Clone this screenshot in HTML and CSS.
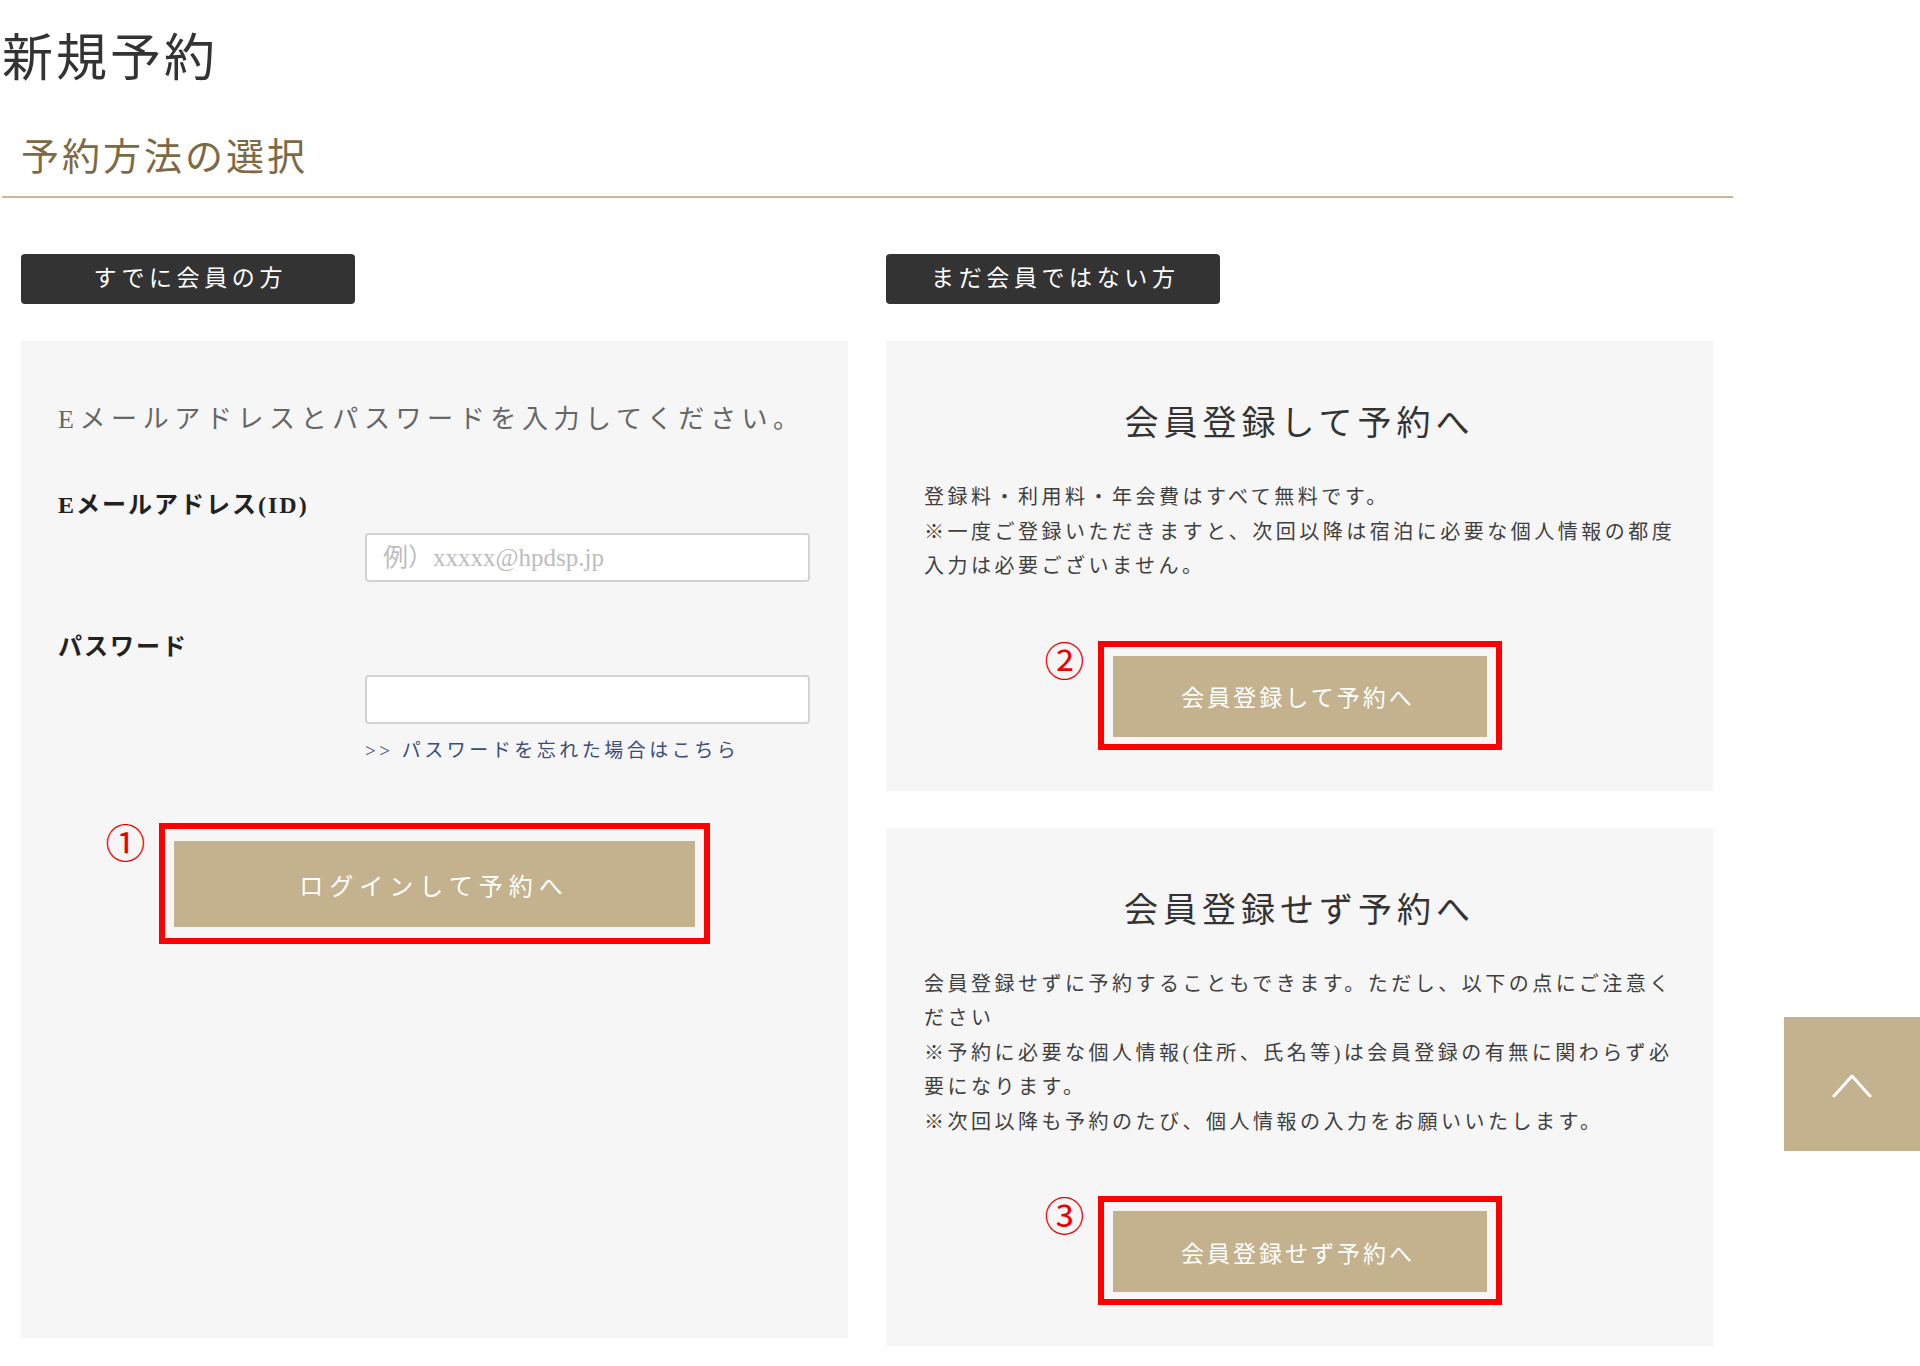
FILE: index.html
```html
<!DOCTYPE html>
<html lang="ja">
<head>
<meta charset="utf-8">
<title>新規予約</title>
<link rel="stylesheet" href="styles.css">
</head>
<body>
<div class="page">
  <h1 class="page-title">新規予約</h1>
  <h2 class="section-title">予約方法の選択</h2>

  <div class="columns">
    <section class="col">
      <div class="tag">すでに会員の方</div>
      <div class="panel panel-login">
        <p class="intro">Eメールアドレスとパスワードを入力してください。</p>
        <div class="field">
          <label class="field-label" for="email">Eメールアドレス(ID)</label>
          <input class="field-input" id="email" type="text" placeholder="例）xxxxx@hpdsp.jp">
        </div>
        <div class="field">
          <label class="field-label" for="pw">パスワード</label>
          <input class="field-input" id="pw" type="password">
          <a class="forgot" href="#">&gt;&gt; パスワードを忘れた場合はこちら</a>
        </div>
        <div class="annot annot-login">
          <span class="annot-num">①</span>
          <button class="btn btn-login" type="button">ログインして予約へ</button>
        </div>
      </div>
    </section>

    <section class="col">
      <div class="tag">まだ会員ではない方</div>
      <div class="panel panel-option">
        <h3 class="option-title">会員登録して予約へ</h3>
        <p class="note">登録料・利用料・年会費はすべて無料です。<br>※一度ご登録いただきますと、次回以降は宿泊に必要な個人情報の都度入力は必要ございません。</p>
        <div class="annot annot-option">
          <span class="annot-num">②</span>
          <button class="btn btn-option" type="button">会員登録して予約へ</button>
        </div>
      </div>
      <div class="panel panel-option">
        <h3 class="option-title">会員登録せず予約へ</h3>
        <p class="note">会員登録せずに予約することもできます。ただし、以下の点にご注意ください<br>※予約に必要な個人情報(住所、氏名等)は会員登録の有無に関わらず必要になります。<br>※次回以降も予約のたび、個人情報の入力をお願いいたします。</p>
        <div class="annot annot-option">
          <span class="annot-num">③</span>
          <button class="btn btn-option" type="button">会員登録せず予約へ</button>
        </div>
      </div>
    </section>
  </div>
</div>

<a class="to-top" href="#" aria-label="ページトップへ">
  <svg class="to-top-icon" width="40" height="24" viewBox="0 0 40 24"><polyline points="2,22 20,2 38,22" fill="none" stroke="#ffffff" stroke-width="3" stroke-linecap="round" stroke-linejoin="round"/></svg>
</a>
</body>
</html>
```

FILE: styles.css
```css
* { box-sizing: border-box; }

html, body {
  margin: 0;
  padding: 0;
  background: #ffffff;
}

body {
  font-family: "Liberation Serif", "Noto Sans CJK JP", serif;
  color: #333333;
}

.page {
  width: 1733px;
}

.page-title {
  margin: 29px 0 0 2px;
  font-size: 51px;
  line-height: 60px;
  font-weight: 400;
  letter-spacing: 3px;
  color: #333333;
}

.section-title {
  margin: 46px 0 0 2px;
  padding: 0 0 17px 19px;
  font-size: 38px;
  line-height: 44px;
  font-weight: 400;
  letter-spacing: 3px;
  color: #7d6a45;
  border-bottom: 2px solid #c8b792;
}

.columns {
  margin-top: 56px;
  padding: 0 20px 0 21px;
  display: grid;
  grid-template-columns: 827px 827px;
  column-gap: 38px;
  align-items: start;
}

.col {
  display: flex;
  flex-direction: column;
}

.tag {
  width: 334px;
  height: 50px;
  line-height: 50px;
  background: #333333;
  color: #ffffff;
  border-radius: 4px;
  text-align: center;
  font-size: 23px;
  letter-spacing: 4.6px;
  padding-left: 4.6px;
}

.panel {
  margin-top: 37px;
  background: #f6f6f6;
}

/* login panel */
.panel-login {
  min-height: 997px;
  padding: 59px 38px 40px 37px;
}

.intro {
  margin: 0;
  font-size: 26px;
  line-height: 40px;
  letter-spacing: 5.6px;
  color: #666666;
  white-space: nowrap;
}

.field {
  margin-top: 49px;
  display: flex;
  flex-direction: column;
}

.field-label {
  font-size: 24px;
  line-height: 32px;
  font-weight: 700;
  letter-spacing: 2px;
  color: #222222;
}

.field-input {
  align-self: flex-end;
  margin-top: 12px;
  width: 445px;
  height: 49px;
  padding: 0 16px;
  background: #ffffff;
  border: 2px solid #d3d3d3;
  border-radius: 4px;
  font-family: "Liberation Serif", "Noto Sans CJK JP", serif;
  font-size: 25px;
  color: #333333;
  outline: none;
}

.field-input::placeholder {
  color: #bdbdbd;
}

.forgot {
  align-self: flex-end;
  width: 445px;
  margin-top: 12px;
  font-size: 19px;
  line-height: 30px;
  letter-spacing: 3.5px;
  color: #3b4c7a;
  text-decoration: none;
}

/* annotation frames */
.annot {
  position: relative;
  margin: 0 auto;
  border: 6px solid #ff0000;
}

.annot-login {
  margin-top: 57px;
  width: 551px;
  padding: 12px 9px 11px 9px;
}

.annot-option {
  margin-top: 57px;
  width: 404px;
  padding: 9px 9px 7px 9px;
}

.annot-num {
  position: absolute;
  right: calc(100% + 19px);
  top: -8px;
  font-family: "Noto Sans CJK JP", sans-serif;
  font-size: 40px;
  line-height: 40px;
  color: #ee0000;
}

.btn {
  display: block;
  border: none;
  margin: 0;
  background: #c3b28d;
  color: #ffffff;
  font-family: "Liberation Serif", "Noto Sans CJK JP", serif;
  cursor: pointer;
  text-align: center;
}

.btn-login {
  width: 521px;
  height: 86px;
  font-size: 24px;
  letter-spacing: 6px;
  padding-left: 6px;
}

.btn-option {
  width: 374px;
  height: 81px;
  font-size: 23px;
  letter-spacing: 3px;
  padding-left: 3px;
}

/* option panels */
.panel-option {
  padding: 61px 0 41px 0;
}

.option-title {
  margin: 0;
  text-align: center;
  font-size: 34px;
  line-height: 44px;
  font-weight: 400;
  letter-spacing: 5px;
  color: #333333;
}

.note {
  margin: 34px 0 0 38px;
  width: 763px;
  font-size: 20px;
  line-height: 34.5px;
  letter-spacing: 3.5px;
  color: #3f3f3f;
}

/* page top button */
.to-top {
  position: fixed;
  right: 0;
  top: 1017px;
  width: 136px;
  height: 134px;
  background: #c3b28d;
  display: flex;
  align-items: center;
  justify-content: center;
}

.to-top-icon {
  display: block;
  margin-top: 3px;
}
```
